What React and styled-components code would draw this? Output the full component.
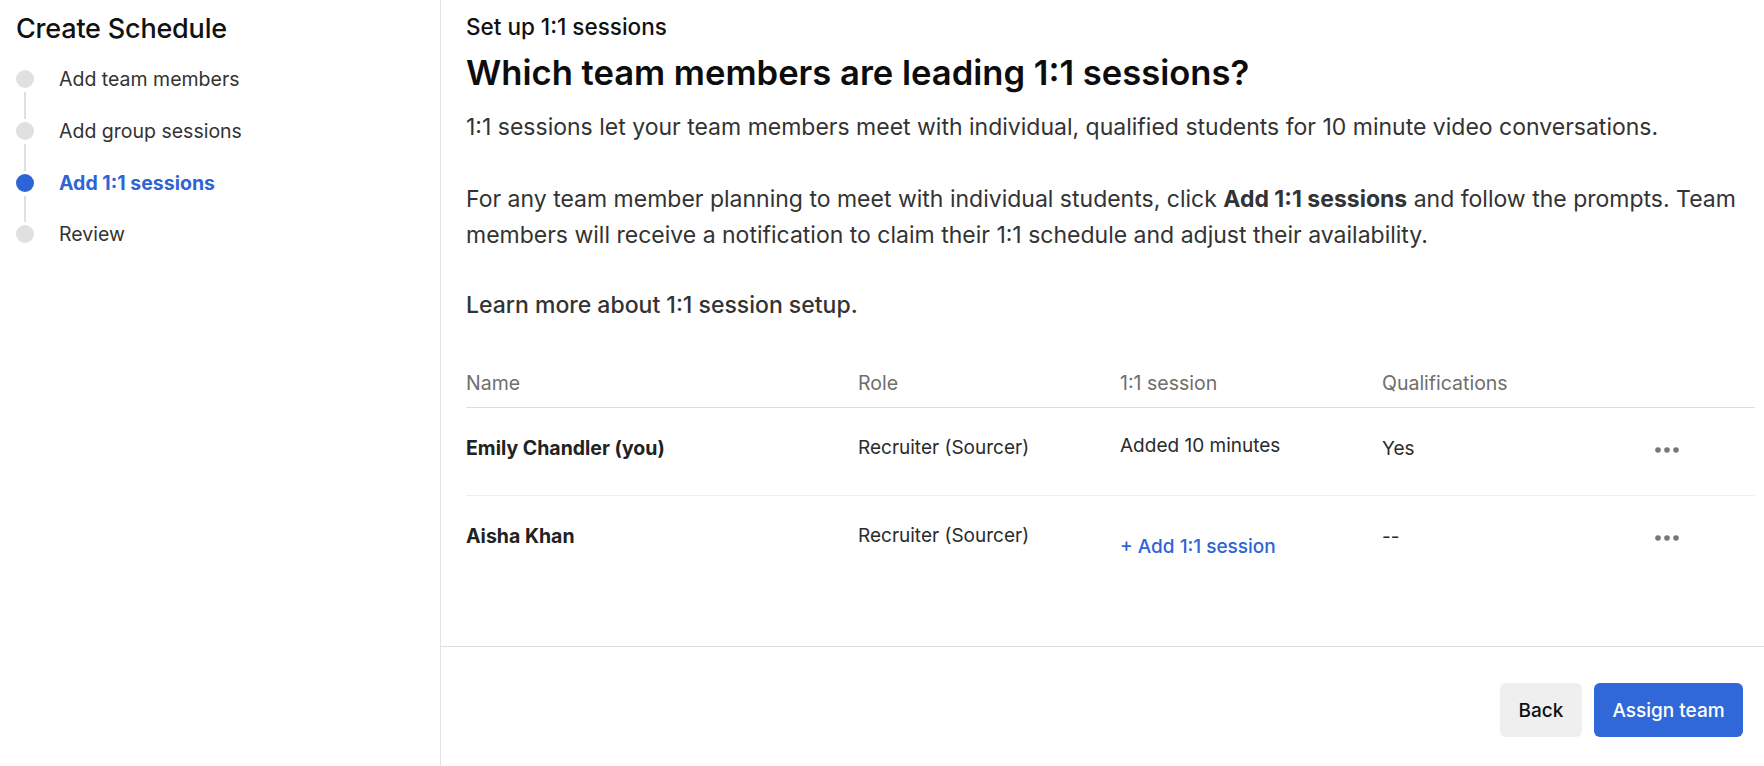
import styled, { createGlobalStyle } from "styled-components";

const GlobalStyle = createGlobalStyle`
  * { box-sizing: border-box; }
  html, body { margin: 0; padding: 0; background: #fff; }
  body {
    font-family: Inter, "Noto Sans", "Liberation Sans", sans-serif;
    color: #333;
    -webkit-font-smoothing: antialiased;
  }
`;

const steps = [
  { label: "Add team members" },
  { label: "Add group sessions" },
  { label: "Add 1:1 sessions", active: true },
  { label: "Review" },
];

const members = [
  {
    name: "Emily Chandler (you)",
    role: "Recruiter (Sourcer)",
    session: "Added 10 minutes",
    qualified: "Yes",
  },
  {
    name: "Aisha Khan",
    role: "Recruiter (Sourcer)",
    session: null,
    qualified: "--",
  },
];

const Layout = () => {
  return (
    <Page>
      <Sidebar>
        <SidebarTitle>Create Schedule</SidebarTitle>
        <StepList>
          {steps.map((step, i) => (
            <Step key={step.label}>
              <Indicator>
                <Dot $active={step.active} />
                {i < steps.length - 1 && <Connector />}
              </Indicator>
              <StepLabel $active={step.active}>{step.label}</StepLabel>
            </Step>
          ))}
        </StepList>
      </Sidebar>

      <Main>
        <Content>
          <Eyebrow>Set up 1:1 sessions</Eyebrow>
          <Heading>Which team members are leading 1:1 sessions?</Heading>
          <Paragraph>
            1:1 sessions let your team members meet with individual, qualified
            students for 10 minute video conversations.
          </Paragraph>
          <Paragraph>
            For any team member planning to meet with individual students, click{" "}
            <strong>Add 1:1 sessions</strong> and follow the prompts. Team
            <br />
            members will receive a notification to claim their 1:1 schedule and
            adjust their availability.
          </Paragraph>
          <LearnMore>Learn more about 1:1 session setup.</LearnMore>

          <Table>
            <HeaderRow>
              <HeaderCell>Name</HeaderCell>
              <HeaderCell>Role</HeaderCell>
              <HeaderCell>1:1 session</HeaderCell>
              <HeaderCell>Qualifications</HeaderCell>
              <HeaderCell />
            </HeaderRow>
            {members.map((m, i) => (
              <Row key={m.name} $last={i === members.length - 1}>
                <NameCell>{m.name}</NameCell>
                <Cell>{m.role}</Cell>
                {m.session ? (
                  <Cell $offset={-2}>{m.session}</Cell>
                ) : (
                  <Cell>
                    <AddLink type="button">+ Add 1:1 session</AddLink>
                  </Cell>
                )}
                <Cell $offset={1}>{m.qualified}</Cell>
                <Cell>
                  <MoreButton type="button" aria-label="More options">
                    <svg width="24" height="6" viewBox="0 0 24 6">
                      <circle cx="3" cy="3" r="2.8" fill="#777" />
                      <circle cx="12" cy="3" r="2.8" fill="#777" />
                      <circle cx="21" cy="3" r="2.8" fill="#777" />
                    </svg>
                  </MoreButton>
                </Cell>
              </Row>
            ))}
          </Table>
        </Content>

        <Footer>
          <SecondaryButton type="button">Back</SecondaryButton>
          <PrimaryButton type="button">Assign team</PrimaryButton>
        </Footer>
      </Main>
    </Page>
  );
};

const Page = styled.div`
  display: flex;
  width: 100%;
  height: 100vh;
  min-height: 766px;
  overflow: hidden;
`;

const Sidebar = styled.aside`
  width: 441px;
  flex-shrink: 0;
  border-right: 1px solid #e3e3e3;
  padding: 13px 16px 0 16px;
`;

const SidebarTitle = styled.h1`
  margin: 0;
  font-size: 27px;
  line-height: 32px;
  font-weight: 500;
  color: #111;
  letter-spacing: -0.2px;
`;

const StepList = styled.ol`
  list-style: none;
  margin: 25px 0 0 0;
  padding: 0;
  display: flex;
  flex-direction: column;
`;

const Step = styled.li`
  display: flex;
  gap: 25px;
  height: 51.8px;
`;

const Indicator = styled.div`
  width: 18px;
  display: flex;
  flex-direction: column;
  align-items: center;
`;

const Dot = styled.span`
  width: 18px;
  height: 18px;
  border-radius: 50%;
  flex-shrink: 0;
  background: ${(p) => (p.$active ? "#2f64d6" : "#e0e0e0")};
`;

const Connector = styled.span`
  flex: 1;
  width: 2px;
  margin: 4px 0 3px;
  background: #e0e0e0;
`;

const StepLabel = styled.span`
  font-size: 19.5px;
  line-height: 18px;
  font-weight: ${(p) => (p.$active ? 700 : 400)};
  color: ${(p) => (p.$active ? "#2f64d6" : "#333")};
`;

const Main = styled.main`
  flex: 1;
  display: flex;
  flex-direction: column;
  min-width: 0;
`;

const Content = styled.section`
  flex: 1;
  padding: 15px 0 0 25px;
`;

const Eyebrow = styled.div`
  font-size: 22.5px;
  line-height: 24px;
  font-weight: 500;
  color: #111;
`;

const Heading = styled.h2`
  margin: 14px 0 0;
  font-size: 34.6px;
  line-height: 38px;
  font-weight: 600;
  color: #0d0d0d;
`;

const Paragraph = styled.p`
  margin: 18px 0 0;
  font-size: 23px;
  line-height: 36px;
  color: #333;
  white-space: nowrap;

  & + & {
    margin-top: 36px;
  }

  strong {
    font-weight: 700;
  }
`;

const LearnMore = styled.p`
  margin: 34px 0 0;
  font-size: 23px;
  line-height: 36px;
  font-weight: 500;
  color: #333;
`;

const Table = styled.div`
  margin: 48px 9px 0 0;
`;

const HeaderRow = styled.div`
  display: grid;
  grid-template-columns: 392px 262px 262px 273px 1fr;
  padding-bottom: 12px;
  border-bottom: 1px solid #dedede;
`;

const HeaderCell = styled.div`
  font-size: 19.5px;
  line-height: 24px;
  color: #6e6e6e;
`;

const Row = styled.div`
  display: grid;
  grid-template-columns: 392px 262px 262px 273px 1fr;
  height: 88px;
  padding-top: 28px;
  border-bottom: ${(p) => (p.$last ? "none" : "1px solid #efefef")};
`;

const Cell = styled.div`
  font-size: 19px;
  line-height: 24px;
  color: #2b2b2b;
  margin-top: ${(p) => p.$offset || 0}px;
`;

const NameCell = styled(Cell)`
  font-size: 19.5px;
  font-weight: 700;
  color: #222;
`;

const AddLink = styled.button`
  margin-top: 11px;
  padding: 0;
  border: none;
  background: none;
  font: inherit;
  font-weight: 500;
  color: #2f64d6;
  cursor: pointer;
`;

const MoreButton = styled.button`
  display: flex;
  align-items: center;
  margin-top: 11px;
  padding: 0;
  border: none;
  background: none;
  cursor: pointer;
`;

const Footer = styled.footer`
  display: flex;
  justify-content: flex-end;
  gap: 12px;
  padding: 36px 21px 29px;
  border-top: 1px solid #dedede;
`;

const BaseButton = styled.button`
  height: 54px;
  border: none;
  border-radius: 6px;
  font-family: inherit;
  font-size: 19px;
  font-weight: 500;
  cursor: pointer;
`;

const SecondaryButton = styled(BaseButton)`
  width: 82px;
  background: #efefef;
  color: #111;
`;

const PrimaryButton = styled(BaseButton)`
  width: 149px;
  background: #3168d9;
  color: #fff;
`;

const App = () => (
  <>
    <GlobalStyle />
    <Layout />
  </>
);

export default App;
